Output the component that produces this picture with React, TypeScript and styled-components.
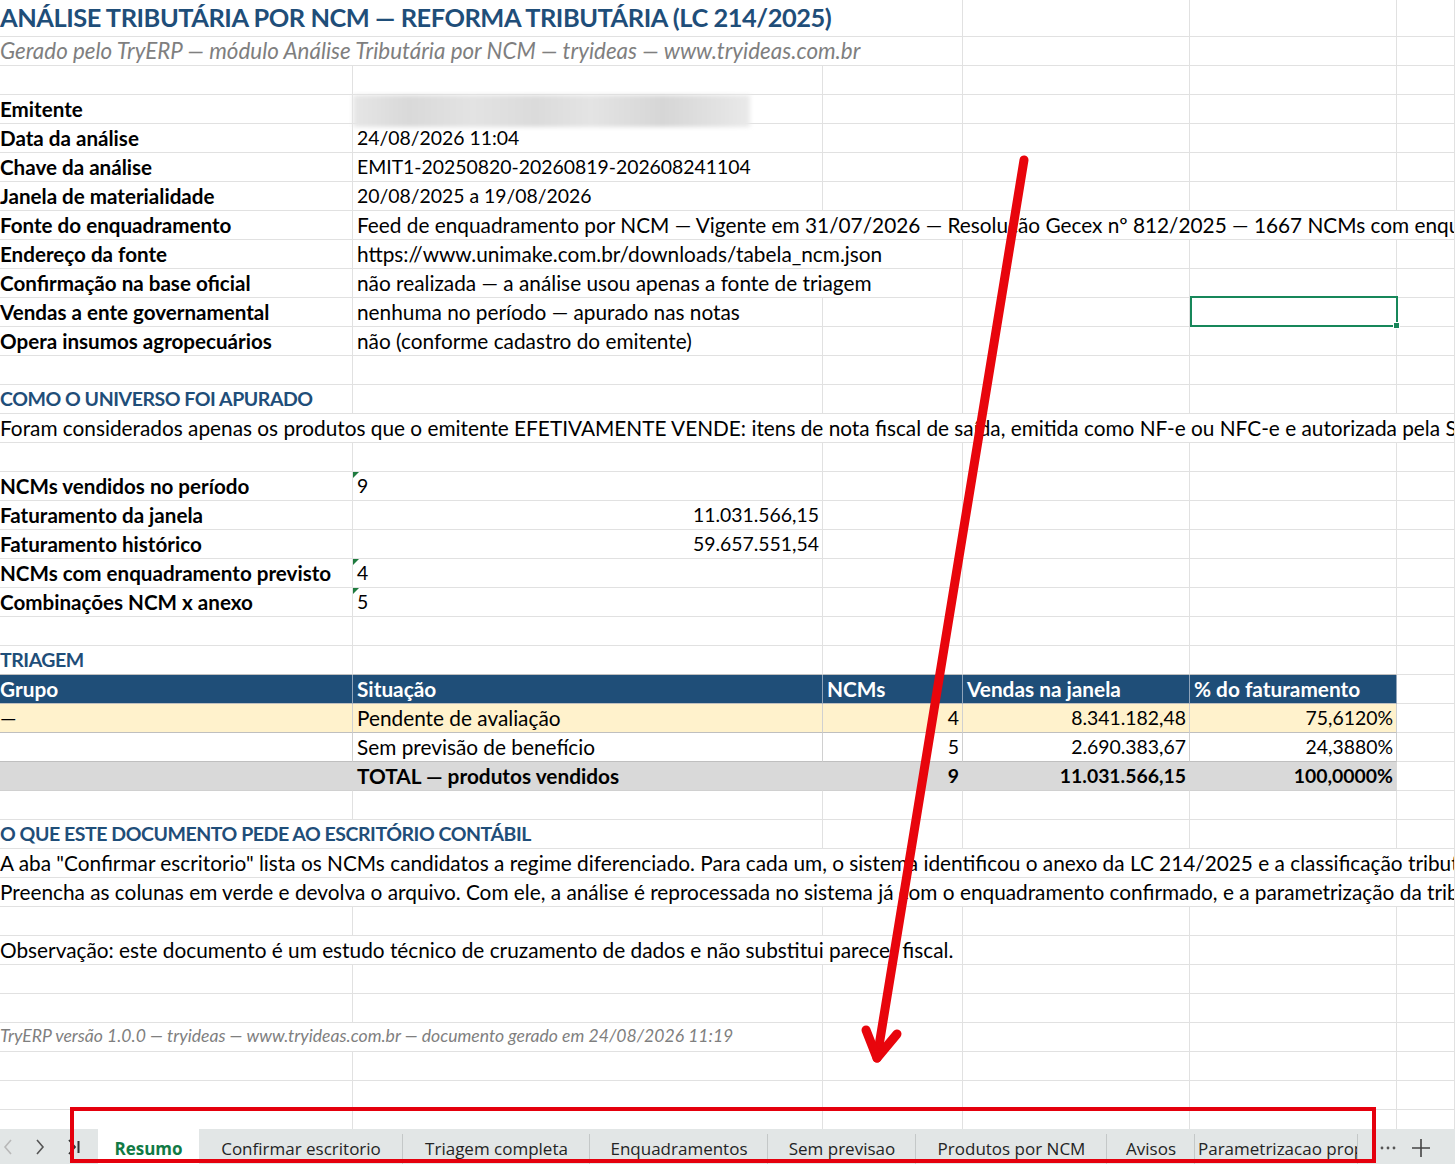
import React from 'react';
import styled, { createGlobalStyle, css } from 'styled-components';

const GlobalStyle = createGlobalStyle`
  html, body {
    margin: 0;
    padding: 0;
    background: #fff;
  }
  body {
    font-family: Lato, "Liberation Sans", sans-serif;
    color: #000;
  }
`;

const GRID = '#e1e1e1';
const BLUE = '#1f4e79';

const Page = styled.div`
  position: relative;
  width: 1455px;
  height: 1164px;
  overflow: hidden;
  background: #fff;
  display: flex;
  flex-direction: column;
`;

const Sheet = styled.div`
  flex: 1;
  overflow: hidden;
  display: flex;
  flex-direction: column;
`;

const Row = styled.div<{ $h?: number }>`
  display: grid;
  grid-template-columns: 353px 470px 140px 227px 207px 1fr;
  grid-template-rows: ${(p) => p.$h ?? 29}px;
  height: ${(p) => p.$h ?? 29}px;
  flex-shrink: 0;
`;

const Cell = styled.div<{
  $span?: number;
  $right?: boolean;
  $num?: boolean;
  $flag?: boolean;
  $selected?: boolean;
}>`
  position: relative;
  grid-column: span ${(p) => p.$span ?? 1};
  box-sizing: border-box;
  border-right: 1px solid ${GRID};
  border-bottom: 1px solid ${GRID};
  display: flex;
  align-items: flex-end;
  justify-content: ${(p) => (p.$right ? 'flex-end' : 'flex-start')};
  padding: 0 3px 2px 4px;
  white-space: nowrap;
  overflow: hidden;
  font-size: ${(p) => (p.$num ? '19.4px' : '20.8px')};
  line-height: 24px;

  ${(p) =>
    p.$flag &&
    css`
      &::before {
        content: '';
        position: absolute;
        top: 0;
        left: 0;
        border-top: 6px solid #1e7a3e;
        border-right: 6px solid transparent;
      }
    `}

  ${(p) =>
    p.$selected &&
    css`
      overflow: visible;
      &::after {
        content: '';
        position: absolute;
        left: 0;
        top: -2px;
        right: -2px;
        bottom: -1px;
        border: 2px solid #17875a;
        z-index: 2;
      }
      &::before {
        content: '';
        position: absolute;
        right: -4px;
        bottom: -3px;
        width: 5px;
        height: 5px;
        background: #17875a;
        border: 1px solid #fff;
        z-index: 3;
      }
    `}
`;

const LabelCell = styled(Cell)`
  padding-left: 0;
  font-weight: 700;
  font-size: 20.6px;
`;

const TextCell = styled(Cell)`
  padding-left: 0;
`;

const HeadingCell = styled(Cell)`
  padding-left: 0;
  font-weight: 700;
  font-size: 19.5px;
  letter-spacing: -0.45px;
  color: ${BLUE};
`;

const TitleCell = styled(Cell)`
  padding-left: 0;
  padding-bottom: 4px;
  font-size: 25.4px;
  letter-spacing: -0.45px;
  line-height: 30px;
  font-weight: 700;
  color: ${BLUE};
`;

const SubtitleCell = styled(Cell)`
  padding-left: 0;
  font-size: 22.4px;
  font-style: italic;
  color: #7f7f7f;
`;

const NoteCell = styled(Cell)`
  padding-left: 0;
  padding-bottom: 3px;
  font-size: 17.6px;
  font-style: italic;
  color: #7f7f7f;
`;

const RedactedCell = styled(Cell)`
  overflow: visible;
  padding: 0;
  align-items: flex-start;
  z-index: 1;
`;

const Redacted = styled.div`
  width: 397px;
  height: 32px;
  margin-bottom: -3px;
  background: linear-gradient(
    90deg,
    #e6e6e6 0%,
    #d9d9d9 14%,
    #e3e3e3 30%,
    #dbdbdb 46%,
    #e4e4e4 60%,
    #d6d6d6 78%,
    #e2e2e2 92%,
    #eaeaea 100%
  );
  filter: blur(2px);
`;

type Tone = 'head' | 'warn' | 'plain' | 'total';

const toneStyles: Record<Tone, ReturnType<typeof css>> = {
  head: css`
    background: #1f4e78;
    color: #fff;
    font-weight: 700;
    border-right-color: #8fa3b9;
    border-bottom-color: #bfbfbf;
  `,
  warn: css`
    background: #fff2cc;
    border-right-color: #d0d0d0;
    border-bottom-color: #bfbfbf;
  `,
  plain: css`
    background: #fff;
    border-right-color: #d0d0d0;
    border-bottom-color: #bfbfbf;
  `,
  total: css`
    background: #d9d9d9;
    font-weight: 700;
    border-right-color: #d9d9d9;
    border-bottom-color: #d0d0d0;
  `,
};

const TableCell = styled(Cell)<{ $tone: Tone; $first?: boolean }>`
  ${(p) => toneStyles[p.$tone]}
  ${(p) =>
    p.$first &&
    css`
      padding-left: 0;
    `}
`;

const TableTopCell = styled(HeadingCell)`
  border-bottom-color: #bfbfbf;
`;

const TableTopBlank = styled(Cell)`
  border-bottom-color: #bfbfbf;
`;

/* sheet tabs */

const TabBar = styled.div`
  height: 35px;
  flex-shrink: 0;
  display: flex;
  align-items: stretch;
  background: #e2e6e6;
  font-family: "Open Sans", "Noto Sans", sans-serif;
  font-size: 17px;
  color: #242424;
`;

const TabNav = styled.div`
  width: 98px;
  display: flex;
  align-items: center;
  gap: 22px;
  padding-left: 3px;
  box-sizing: border-box;
`;

const Tab = styled.div<{ $w: number; $active?: boolean; $clip?: boolean }>`
  width: ${(p) => p.$w}px;
  flex-shrink: 0;
  display: flex;
  align-items: center;
  justify-content: ${(p) => (p.$clip ? 'flex-start' : 'center')};
  padding-left: ${(p) => (p.$clip ? '3px' : '0')};
  box-sizing: border-box;
  white-space: nowrap;
  overflow: hidden;
  padding-top: 4px;
  position: relative;

  ${(p) =>
    p.$active
      ? css`
          background: #fff;
          color: #117a45;
          font-weight: 700;
        `
      : css`
          &::after {
            content: '';
            position: absolute;
            right: 0;
            top: 5px;
            bottom: 0;
            width: 1px;
            background: #c4c8c8;
          }
        `}
`;

const TabTools = styled.div`
  display: flex;
  align-items: center;
  gap: 15px;
  padding-left: 22px;
  padding-top: 3px;
  color: #444;
`;

/* annotations laid over the sheet */

const ArrowLayer = styled.svg`
  position: absolute;
  left: 0;
  top: 0;
  width: 1455px;
  height: 1164px;
  pointer-events: none;
  z-index: 10;
`;

const Callout = styled.div`
  position: absolute;
  left: 70px;
  top: 1107px;
  width: 1306px;
  height: 56px;
  box-sizing: border-box;
  border: 4.5px solid #e5000d;
  pointer-events: none;
  z-index: 10;
`;

const blanks = (n: number, from = 0, selectedAt = -1) =>
  Array.from({ length: n }, (_, i) => (
    <Cell key={`b${i}`} $selected={from + i === selectedAt} />
  ));

const EmptyRow = () => <Row>{blanks(6)}</Row>;

type Info = {
  label: string;
  value: string;
  span?: number;
  num?: boolean;
  selected?: boolean;
};

const infoRows: Info[] = [
  { label: 'Data da análise', value: '24/08/2026 11:04', num: true },
  { label: 'Chave da análise', value: 'EMIT1-20250820-20260819-202608241104', num: true },
  { label: 'Janela de materialidade', value: '20/08/2025 a 19/08/2026', num: true },
  {
    label: 'Fonte do enquadramento',
    value:
      'Feed de enquadramento por NCM — Vigente em 31/07/2026 — Resolução Gecex nº 812/2025 — 1667 NCMs com enquadramento previsto',
    span: 5,
  },
  {
    label: 'Endereço da fonte',
    value: 'https://www.unimake.com.br/downloads/tabela_ncm.json',
    span: 2,
  },
  {
    label: 'Confirmação na base oficial',
    value: 'não realizada — a análise usou apenas a fonte de triagem',
    span: 2,
  },
  {
    label: 'Vendas a ente governamental',
    value: 'nenhuma no período — apurado nas notas',
    selected: true,
  },
  { label: 'Opera insumos agropecuários', value: 'não (conforme cadastro do emitente)' },
];

const InfoRow = ({ label, value, span = 1, num, selected }: Info) => (
  <Row>
    <LabelCell>{label}</LabelCell>
    <Cell $span={span} $num={num}>
      {value}
    </Cell>
    {blanks(5 - span, 1 + span, selected ? 4 : -1)}
  </Row>
);

type Metric = { label: string; value: string; right?: boolean };

const metrics: Metric[] = [
  { label: 'NCMs vendidos no período', value: '9' },
  { label: 'Faturamento da janela', value: '11.031.566,15', right: true },
  { label: 'Faturamento histórico', value: '59.657.551,54', right: true },
  { label: 'NCMs com enquadramento previsto', value: '4' },
  { label: 'Combinações NCM x anexo', value: '5' },
];

type Line = { tone: Tone; grupo: string; situacao: string; ncms: string; vendas: string; pct: string };

const triagem: Line[] = [
  { tone: 'head', grupo: 'Grupo', situacao: 'Situação', ncms: 'NCMs', vendas: 'Vendas na janela', pct: '% do faturamento' },
  { tone: 'warn', grupo: '—', situacao: 'Pendente de avaliação', ncms: '4', vendas: '8.341.182,48', pct: '75,6120%' },
  { tone: 'plain', grupo: '', situacao: 'Sem previsão de benefício', ncms: '5', vendas: '2.690.383,67', pct: '24,3880%' },
  { tone: 'total', grupo: '', situacao: 'TOTAL — produtos vendidos', ncms: '9', vendas: '11.031.566,15', pct: '100,0000%' },
];

const tabs = [
  { name: 'Resumo', w: 101, active: true },
  { name: 'Confirmar escritorio', w: 204 },
  { name: 'Triagem completa', w: 187 },
  { name: 'Enquadramentos', w: 178 },
  { name: 'Sem previsao', w: 148 },
  { name: 'Produtos por NCM', w: 191 },
  { name: 'Avisos', w: 88 },
  { name: 'Parametrizacao proprio', w: 163, clip: true },
];

const Chevron = ({ dir, color }: { dir: 'left' | 'right'; color: string }) => (
  <svg width="10" height="18" viewBox="0 0 10 18">
    <path
      d={dir === 'left' ? 'M8 2 L2 9 L8 16' : 'M2 2 L8 9 L2 16'}
      fill="none"
      stroke={color}
      strokeWidth="1.6"
    />
  </svg>
);

const LastIcon = () => (
  <svg width="14" height="18" viewBox="0 0 14 18">
    <path d="M2 2 L8 9 L2 16" fill="none" stroke="#333" strokeWidth="1.8" />
    <path d="M11.5 3 L11.5 15" stroke="#333" strokeWidth="2" />
  </svg>
);

const MoreIcon = () => (
  <svg width="16" height="6" viewBox="0 0 16 6">
    <circle cx="2" cy="3" r="1.4" fill="#555" />
    <circle cx="8" cy="3" r="1.4" fill="#555" />
    <circle cx="14" cy="3" r="1.4" fill="#555" />
  </svg>
);

const PlusIcon = () => (
  <svg width="20" height="20" viewBox="0 0 20 20">
    <path d="M10 1 V19 M1 10 H19" stroke="#444" strokeWidth="1.6" />
  </svg>
);

export default function App() {
  return (
    <Page>
      <GlobalStyle />
      <Sheet>
        <Row $h={37}>
          <TitleCell $span={3}>
            ANÁLISE TRIBUTÁRIA POR NCM — REFORMA TRIBUTÁRIA (LC 214/2025)
          </TitleCell>
          {blanks(3)}
        </Row>
        <Row>
          <SubtitleCell $span={3}>
            Gerado pelo TryERP — módulo Análise Tributária por NCM — tryideas — www.tryideas.com.br
          </SubtitleCell>
          {blanks(3)}
        </Row>
        <EmptyRow />
        <Row>
          <LabelCell>Emitente</LabelCell>
          <RedactedCell>
            <Redacted />
          </RedactedCell>
          {blanks(4)}
        </Row>
        {infoRows.map((r) => (
          <InfoRow key={r.label} {...r} />
        ))}
        <EmptyRow />
        <Row>
          <HeadingCell>COMO O UNIVERSO FOI APURADO</HeadingCell>
          {blanks(5)}
        </Row>
        <Row>
          <TextCell $span={6}>
            Foram considerados apenas os produtos que o emitente EFETIVAMENTE VENDE: itens de nota fiscal de saída, emitida como NF-e ou NFC-e e autorizada pela SEFAZ, no período analisado.
          </TextCell>
        </Row>
        <EmptyRow />
        {metrics.map((m) => (
          <Row key={m.label}>
            <LabelCell>{m.label}</LabelCell>
            <Cell $num $right={m.right} $flag={!m.right}>
              {m.value}
            </Cell>
            {blanks(4)}
          </Row>
        ))}
        <EmptyRow />
        <Row>
          <TableTopCell>TRIAGEM</TableTopCell>
          <TableTopBlank />
          <TableTopBlank />
          <TableTopBlank />
          <TableTopBlank />
          <Cell />
        </Row>
        {triagem.map((l) => {
          const isHead = l.tone === 'head';
          return (
            <Row key={l.situacao}>
              <TableCell $tone={l.tone} $first>
                {l.grupo}
              </TableCell>
              <TableCell $tone={l.tone}>{l.situacao}</TableCell>
              <TableCell $tone={l.tone} $right={!isHead} $num={!isHead}>
                {l.ncms}
              </TableCell>
              <TableCell $tone={l.tone} $right={!isHead} $num={!isHead}>
                {l.vendas}
              </TableCell>
              <TableCell $tone={l.tone} $right={!isHead} $num={!isHead}>
                {l.pct}
              </TableCell>
              <Cell />
            </Row>
          );
        })}
        <EmptyRow />
        <Row>
          <HeadingCell $span={2}>O QUE ESTE DOCUMENTO PEDE AO ESCRITÓRIO CONTÁBIL</HeadingCell>
          {blanks(4)}
        </Row>
        <Row>
          <TextCell $span={6}>
            A aba "Confirmar escritorio" lista os NCMs candidatos a regime diferenciado. Para cada um, o sistema identificou o anexo da LC 214/2025 e a classificação tributária provável.
          </TextCell>
        </Row>
        <Row>
          <TextCell $span={6}>
            Preencha as colunas em verde e devolva o arquivo. Com ele, a análise é reprocessada no sistema já com o enquadramento confirmado, e a parametrização da tributação é gerada.
          </TextCell>
        </Row>
        <EmptyRow />
        <Row>
          <TextCell $span={3}>
            Observação: este documento é um estudo técnico de cruzamento de dados e não substitui parecer fiscal.
          </TextCell>
          {blanks(3)}
        </Row>
        <EmptyRow />
        <EmptyRow />
        <Row>
          <NoteCell $span={2}>
            TryERP versão 1.0.0 — tryideas — www.tryideas.com.br — documento gerado em 24/08/2026 11:19
          </NoteCell>
          {blanks(4)}
        </Row>
        <EmptyRow />
        <EmptyRow />
        <EmptyRow />
      </Sheet>

      <TabBar>
        <TabNav>
          <Chevron dir="left" color="#b8b8b8" />
          <Chevron dir="right" color="#555" />
          <LastIcon />
        </TabNav>
        {tabs.map((t) => (
          <Tab key={t.name} $w={t.w} $active={t.active} $clip={t.clip}>
            {t.name}
          </Tab>
        ))}
        <TabTools>
          <MoreIcon />
          <PlusIcon />
        </TabTools>
      </TabBar>

      <Callout />
      <ArrowLayer viewBox="0 0 1455 1164">
        <g stroke="#e8050c" strokeWidth="9" strokeLinecap="round" strokeLinejoin="round" fill="none">
          <path d="M1024 160 L877 1058" />
          <path d="M866 1030 L877 1058 L897 1034" />
        </g>
      </ArrowLayer>
    </Page>
  );
}
